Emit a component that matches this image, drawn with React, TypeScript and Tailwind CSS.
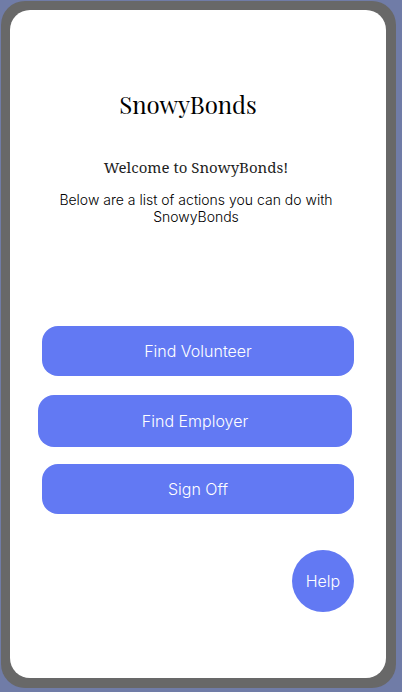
import React from "react";

type ActionProps = {
  label: string;
  className: string;
};

function ActionButton({ label, className }: ActionProps) {
  return (
    <button
      type="button"
      className={`rounded-2xl bg-[#6279f3] text-center text-base font-light text-white ${className}`}
    >
      {label}
    </button>
  );
}

export default function App() {
  return (
    <div className="flex min-h-screen flex-col bg-[#707ca7] pt-px pr-1.5 pb-1 pl-px font-['Inter','Liberation_Sans',sans-serif]">
      <div className="flex grow flex-col rounded-3xl bg-[#686868] p-[10px] pl-[9px] pt-[9px]">
        <main className="flex grow flex-col rounded-[20px] bg-white px-8">
          <header className="pt-[78px] pr-1 text-center">
            <h1 className="pr-4 font-['Playfair_Display','Liberation_Serif',serif] text-2xl leading-8 text-black">
              SnowyBonds
            </h1>
            <h2 className="mt-[37px] font-['Noto_Serif','Liberation_Serif',serif] text-[15px] leading-5 text-[#1e1e1e]">
              Welcome to SnowyBonds!
            </h2>
            <p className="mt-3.5 text-sm leading-[17px] font-light text-black">
              Below are a list of actions you can do with SnowyBonds
            </p>
          </header>
          <nav aria-label="Actions" className="mt-[101px] flex flex-col">
            <ActionButton label="Find Volunteer" className="h-[50px]" />
            <ActionButton label="Find Employer" className="mt-[19px] mr-0.5 -ml-1 h-[52px]" />
            <ActionButton label="Sign Off" className="mt-[17px] h-[50px]" />
          </nav>
          <button
            type="button"
            className="mt-9 size-[62px] self-end rounded-full bg-[#6279f3] text-base font-light text-white"
          >
            Help
          </button>
        </main>
      </div>
    </div>
  );
}
